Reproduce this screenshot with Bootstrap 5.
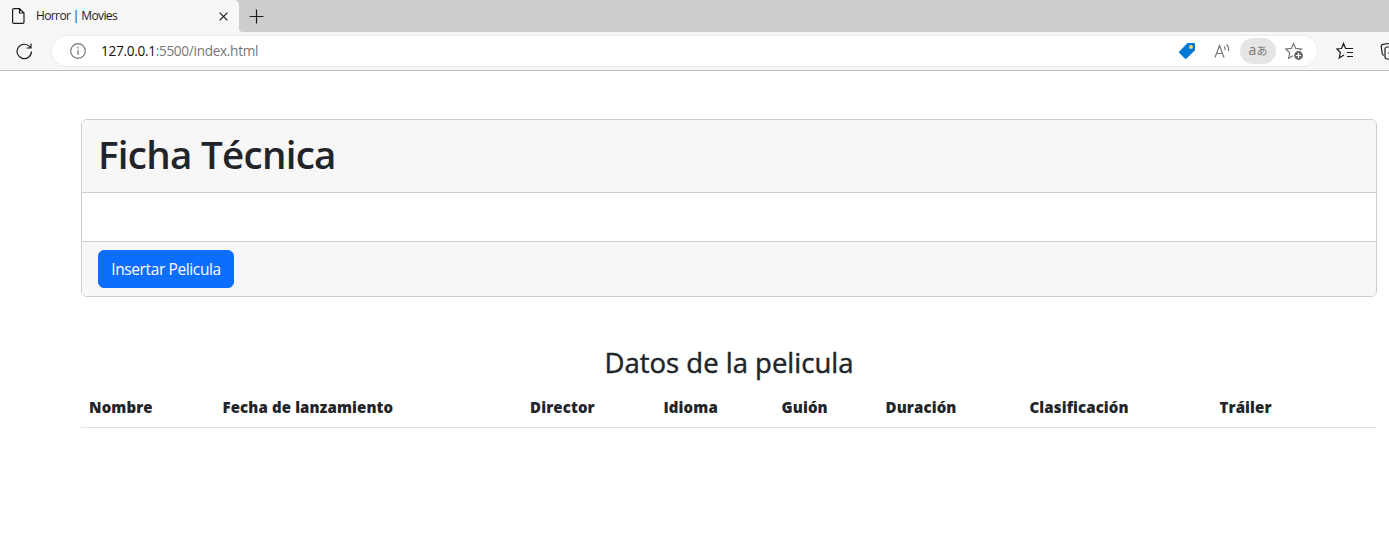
<!DOCTYPE html>
<html lang="es">
<head>
<meta charset="utf-8">
<meta name="viewport" content="width=device-width, initial-scale=1">
<title>Horror | Movies</title>
<link href="https://cdn.jsdelivr.net/npm/bootstrap@5.3.0/dist/css/bootstrap.min.css" rel="stylesheet">
<style>
  body { font-family: "Open Sans", "Noto Sans", sans-serif; height: 548px; }
  svg { display: block; flex: none; fill: none; stroke: #1b1b1b; stroke-width: 1.2; }
  .tab-strip { height: 32px; background: #f7f7f7; }
  .tab-active { width: 239px; padding: 0 11px 0 12px; background: #f7f7f7; font-size: 12px; color: #1b1b1b; border-top-right-radius: 5px; }
  .tab-corner { background: #cdcdcd; }
  .tab-rest { background: #cdcdcd; border-bottom-left-radius: 4px; padding-left: 10px; }
  .tab-title { letter-spacing: -.62px; margin-left: 11px; }
  .toolbar { height: 39px; background: #f7f7f7; border-bottom: 1px solid #bdbdbd; padding-left: 16px; }
  .address { width: 1265px; height: 30px; margin-left: 19px; padding: 0 13px 0 18px; background: #fff; box-shadow: 0 0 3px rgba(0,0,0,.09); }
  .url { margin-left: 15px; font-size: 13.6px; letter-spacing: -.3px; color: #767676; }
  .url span { color: #111; }
  .grey-icon { stroke: #767676; }
  .read-icon { margin-left: 17px; }
  .star-icon { margin-left: 9px; }
  .favorites-icon { margin-left: 19px; }
  .collections-icon { margin-left: 26px; }
  .translate-pill { width: 36px; height: 26px; background: #e5e5e5; color: #767676; margin-left: 9px; font-size: 14px; line-height: 24px; }
  .translate-pill small { font: 11px "Noto Sans CJK JP", sans-serif; }
  .page-area { width: 1458px; }
  .page-area .container { max-width: 1320px; }
  .card { --bs-card-border-color: #cdcdcd; --bs-card-cap-bg: #f7f7f7; }
  .card-body { height: 48px; flex: none; }
  h1 { font-size: 38.5px; font-weight: 600; letter-spacing: -.7px; line-height: 48px; padding-top: 2px; height: 48px; }
  h3 { font-size: 27.5px; font-weight: 400; -webkit-text-stroke: .45px; line-height: 33.6px; padding-top: 1px; height: 33.6px; }
  .btn { font-size: 15.5px; line-height: 24px; letter-spacing: -.38px; width: 136px; white-space: nowrap; }
  .movie-table { table-layout: fixed; }
  .movie-table th { font-weight: 800; font-size: 15px; line-height: 24px; letter-spacing: .12px; white-space: nowrap; }
  .c-name, .c-director { width: 133.5px; }
  .c-date { width: 307.5px; }
  .c-lang { width: 118px; }
  .c-script { width: 104px; }
  .c-time { width: 144px; }
  .c-class { width: 190px; }
</style>
</head>
<body class="overflow-hidden bg-white">
<header>
  <div class="tab-strip d-flex">
    <div class="tab-corner"><div class="tab-active d-flex align-items-center h-100">
      <svg width="13" height="16" viewBox="0 0 13 16"><path d="M2 .6h5.5L12 5v9q0 1.400-1.400 1.400H2Q.6 15.400.6 14V2Q.6.6 2 .6zM7.500.8V5H12"/></svg>
      <span class="tab-title me-auto">Horror | Movies</span>
      <svg width="9" height="9" viewBox="0 0 9 9"><path d="M.6.6l7.800 7.800M8.400.6L.6 8.400"/></svg>
    </div></div>
    <div class="tab-rest flex-grow-1 d-flex align-items-center">
      <svg width="15" height="15" viewBox="0 0 15 15"><path d="M7.500.5v14M.5 7.500h14"/></svg>
    </div>
  </div>
  <div class="toolbar d-flex align-items-center">
    <svg width="17" height="17" viewBox="0 0 17 17"><path d="M15.500 8.500A7.200 7.200 0 1 1 13.800 3.800L15 5M15 .6V5H10.600"/></svg>
    <div class="address rounded-pill d-flex align-items-center flex-shrink-0">
      <svg class="grey-icon" width="16" height="16" viewBox="0 0 16 16"><circle cx="8" cy="8" r="7.300"/><path d="M8 7v5M8 4v1.500"/></svg>
      <div class="url me-auto"><span>127.0.0.1</span>:5500/index.html</div>
      <svg width="18" height="18" viewBox="0 0 18 18"><path d="M9.500 1H16q1 0 1 1v6.200L8.500 16.500q-.8.8-1.600 0L1.300 11q-.8-.8 0-1.600z" fill="#0078d4" stroke="none"/><circle cx="13" cy="5" r="1.900" fill="#ffd75e" stroke="none"/></svg>
      <svg class="grey-icon read-icon" width="18" height="18" viewBox="0 0 18 18"><path d="M2 15.500L6.500 3.500l4.500 12M3.600 11.500h5.800M11 4.500q1.400 1.200 1.100 3.500M13.500 2.300q2.700 2.700 2 6.700"/></svg>
      <div class="translate-pill rounded-pill text-center">a<small>あ</small></div>
      <svg class="grey-icon star-icon" width="19" height="19" viewBox="0 0 19 19"><path d="M8.500 1.500l2.200 4.900 5.600.6-4.100 3.700 1.100 5.500-4.800-2.800-4.800 2.800 1.100-5.500L.7 7l5.600-.6z"/><circle cx="13.500" cy="13.500" r="5" fill="#666" stroke="#fff"/><path d="M13.500 11v5M11 13.500h5" stroke="#fff"/></svg>
    </div>
    <svg class="favorites-icon" width="18" height="18" viewBox="0 0 18 18"><path d="M12.500 6.500H9.600L7.500 1.500 5.500 6.500.8 7l3.600 3.500-1.200 5.500 4.800-2.900M12 6.500h5M11 10.500h6M11 14.500h6"/></svg>
    <svg class="collections-icon" width="18" height="18" viewBox="0 0 18 18"><path d="M14 2.500q-.4-1.500-2-1.400L3 2.300Q1 2.600 1.200 4.500l1 7q.3 1.600 1.800 1.900"/><rect x="5" y="5" width="12" height="12" rx="2"/><path d="M8 11h6M11 8v6"/></svg>
  </div>
</header>
<main class="page-area">
  <div class="container">
    <div class="card my-5">
      <div class="card-header"><h1>Ficha Técnica</h1></div>
      <div class="card-body"></div>
      <div class="card-footer"><button type="button" class="btn btn-primary px-0">Insertar Pelicula</button></div>
    </div>
    <h3 class="text-center">Datos de la pelicula</h3>
    <table class="table movie-table">
      <colgroup><col class="c-name"><col class="c-date"><col class="c-director"><col class="c-lang"><col class="c-script"><col class="c-time"><col class="c-class"><col></colgroup>
      <thead><tr><th>Nombre</th><th>Fecha de lanzamiento</th><th>Director</th><th>Idioma</th><th>Guión</th><th>Duración</th><th>Clasificación</th><th>Tráiler</th></tr></thead>
    </table>
  </div>
</main>
<script src="https://cdn.jsdelivr.net/npm/bootstrap@5.3.0/dist/js/bootstrap.bundle.min.js"></script>
</body>
</html>
